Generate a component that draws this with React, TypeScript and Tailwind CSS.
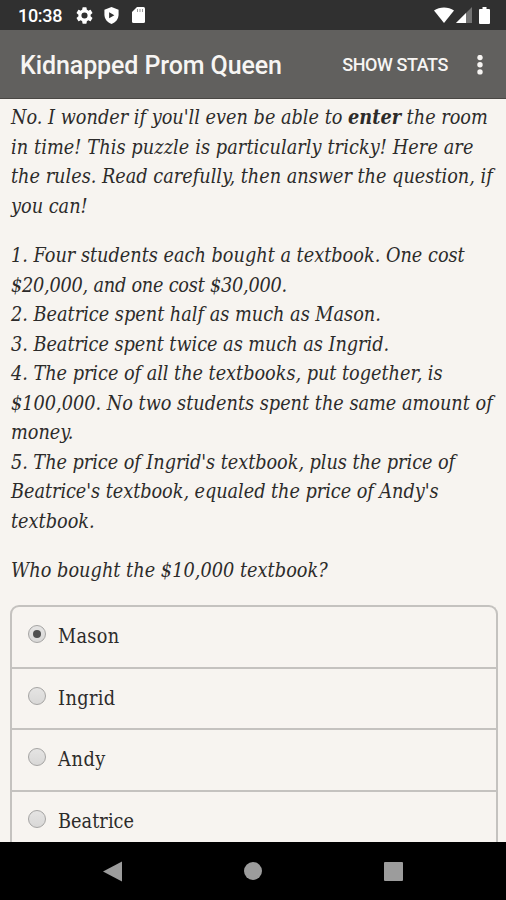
import { useState } from 'react';

type Line = { text: string; tracking?: string; bold?: string; rest?: string };

const intro: Line[] = [
  { text: "No. I wonder if you'll even be able to ", bold: 'enter', rest: ' the room' },
  { text: 'in time! This puzzle is particularly tricky! Here are', tracking: 'tracking-[0.09px]' },
  { text: 'the rules. Read carefully, then answer the question, if' },
  { text: 'you can!' },
];

const rules: Line[] = [
  { text: '1. Four students each bought a textbook. One cost' },
  { text: '$20,000, and one cost $30,000.', tracking: 'tracking-[-0.23px]' },
  { text: '2. Beatrice spent half as much as Mason.' },
  { text: '3. Beatrice spent twice as much as Ingrid.', tracking: 'tracking-[-0.03px]' },
  { text: '4. The price of all the textbooks, put together, is', tracking: 'tracking-[-0.03px]' },
  { text: '$100,000. No two students spent the same amount of' },
  { text: 'money.' },
  { text: "5. The price of Ingrid's textbook, plus the price of", tracking: 'tracking-[-0.05px]' },
  { text: "Beatrice's textbook, equaled the price of Andy's", tracking: 'tracking-[-0.05px]' },
  { text: 'textbook.' },
];

const question: Line[] = [{ text: 'Who bought the $10,000 textbook?', tracking: 'tracking-[0.03px]' }];

const choices = [
  { name: 'Mason', tracking: 'tracking-[0.3px]' },
  { name: 'Ingrid', tracking: 'tracking-[0.4px]' },
  { name: 'Andy', tracking: 'tracking-[0.6px]' },
  { name: 'Beatrice', tracking: 'tracking-[0.05px]' },
];

function Paragraph({ lines }: { lines: Line[] }) {
  return (
    <p className="mb-[19.7px] whitespace-nowrap pl-px italic">
      {lines.map((line) => (
        <span key={line.text} className={`block ${line.tracking ?? ''}`}>
          {line.text}
          {line.bold && <b>{line.bold}</b>}
          {line.rest}
        </span>
      ))}
    </p>
  );
}

function StatusBar() {
  return (
    <div className="flex h-[30px] shrink-0 items-center bg-[#303030] pl-[18px] pr-[16px] text-white">
      <span className="w-[58px] pt-0.5 text-[18px] font-medium leading-none tracking-[-0.3px]">10:38</span>
      <svg className="h-[17px] w-[17px]" viewBox="2 2 20 20" fill="currentColor">
        <path d="M19.14 12.94c.04-.3.06-.61.06-.94s-.02-.64-.07-.94l2.03-1.58a.49.49 0 0 0 .12-.61l-1.92-3.32a.49.49 0 0 0-.59-.22l-2.39.96a7 7 0 0 0-1.62-.94l-.36-2.54a.48.48 0 0 0-.48-.41h-3.84a.48.48 0 0 0-.47.41l-.36 2.54c-.59.24-1.13.57-1.62.94l-2.39-.96a.49.49 0 0 0-.59.22L2.74 8.87a.48.48 0 0 0 .12.61l2.03 1.58a7.6 7.6 0 0 0 0 1.88l-2.03 1.58a.49.49 0 0 0-.12.61l1.92 3.32c.12.22.37.29.59.22l2.39-.96c.5.38 1.03.7 1.62.94l.36 2.54c.05.24.24.41.48.41h3.84c.24 0 .44-.17.47-.41l.36-2.54a7 7 0 0 0 1.62-.94l2.39.96c.22.08.47 0 .59-.22l1.92-3.32a.49.49 0 0 0-.12-.61zM12 15.6a3.6 3.6 0 1 1 0-7.2 3.6 3.6 0 0 1 0 7.2z" />
      </svg>
      <svg className="ml-[11px] h-[17px] w-[15px]" viewBox="0 0 15 18">
        <path fill="currentColor" d="M7.5 0 15 3v5c0 4.6-3.2 8.7-7.5 10C3.2 16.7 0 12.6 0 8V3z" />
        <path fill="#303030" d="M5 5.5v6.4l5.5-3.2z" />
      </svg>
      <svg className="ml-[13px] h-4 w-[13px]" viewBox="0 0 13 16">
        <path fill="currentColor" d="M5 0h6.5A1.5 1.5 0 0 1 13 1.5v13a1.5 1.5 0 0 1-1.5 1.5h-10A1.5 1.5 0 0 1 0 14.5V5z" />
        <path stroke="#999" d="M5.5 2v3M8 2v3M10.5 2v3" />
      </svg>
      <svg className="ml-auto h-4 w-5" viewBox="0 0 20 16" fill="currentColor">
        <path d="M0 3.5C5.5-.5 14.5-.5 20 3.5L10 16z" />
      </svg>
      <svg className="ml-[2px] h-4 w-4" viewBox="0 0 16 16">
        <path fill="#737373" d="M16 0v16H0z" />
        <path fill="currentColor" d="M10 6v10H0z" />
      </svg>
      <svg className="ml-[7px] h-[17px] w-[11px]" viewBox="0 0 11 17" fill="currentColor">
        <path d="M3.5 0h4v2H10a1 1 0 0 1 1 1v13a1 1 0 0 1-1 1H1a1 1 0 0 1-1-1V3a1 1 0 0 1 1-1h2.5z" />
      </svg>
    </div>
  );
}

function AppBar() {
  return (
    <header className="flex h-[69px] shrink-0 items-center border-b border-[#494744] bg-[#61605e] pl-5 pr-[23px] pt-[2px] text-[#f7f5f3]">
      <h1 className="text-[25px] font-medium leading-none tracking-[-0.1px]">Kidnapped Prom Queen</h1>
      <button className="ml-auto text-[18px] font-medium leading-none tracking-[-0.43px]">SHOW STATS</button>
      <button className="ml-[29px]" aria-label="More">
        <svg className="h-5 w-[6px]" viewBox="0 0 6 20" fill="currentColor">
          <circle cx="3" cy="2.5" r="2.7" />
          <circle cx="3" cy="9.7" r="2.7" />
          <circle cx="3" cy="16.9" r="2.7" />
        </svg>
      </button>
    </header>
  );
}

export default function App() {
  const [selected, setSelected] = useState('Mason');

  return (
    <div className="flex h-[900px] w-[506px] flex-col overflow-hidden bg-[#f7f4f0] font-['Roboto',sans-serif]">
      <StatusBar />
      <AppBar />

      <main className="min-h-0 flex-1 overflow-hidden px-[10px] pt-[4.2px] font-['DejaVu_Serif_Condensed','DejaVu_Serif',serif] text-[19.7px] leading-[29.55px] text-[#2c2b2a]">
        <Paragraph lines={intro} />
        <Paragraph lines={rules} />
        <Paragraph lines={question} />

        {/* Answers */}
        <div className="mr-[-2px] rounded-t-[9px] border-2 border-b-0 border-[#c4c2bf]">
          {choices.map(({ name, tracking }) => (
            <label key={name} className="flex h-[61.5px] items-center border-b-2 border-[#c4c2bf] pl-4">
              <input
                type="radio"
                name="answer"
                className="sr-only"
                checked={selected === name}
                onChange={() => setSelected(name)}
              />
              <span className="mb-[6px] mr-[12px] flex h-[18px] w-[18px] items-center justify-center rounded-full border border-[#a5a4a3] bg-linear-to-b from-[#e5e4e3] to-[#d9d8d7]">
                {selected === name && <span className="h-2 w-2 rounded-full bg-[#4e4e4e]" />}
              </span>
              <span className={tracking}>{name}</span>
            </label>
          ))}
        </div>
      </main>

      {/* Navigation bar */}
      <nav className="flex h-[58px] shrink-0 items-center justify-between bg-black px-[103px] text-[#9c9c9c]">
        <svg className="h-[21px] w-[19px]" viewBox="0 0 19 21" fill="currentColor">
          <path d="M19 .5v20L0 10.5z" />
        </svg>
        <span className="h-[18px] w-[18px] rounded-full bg-current" />
        <span className="h-[19px] w-[19px] rounded-[1px] bg-current" />
      </nav>
    </div>
  );
}
